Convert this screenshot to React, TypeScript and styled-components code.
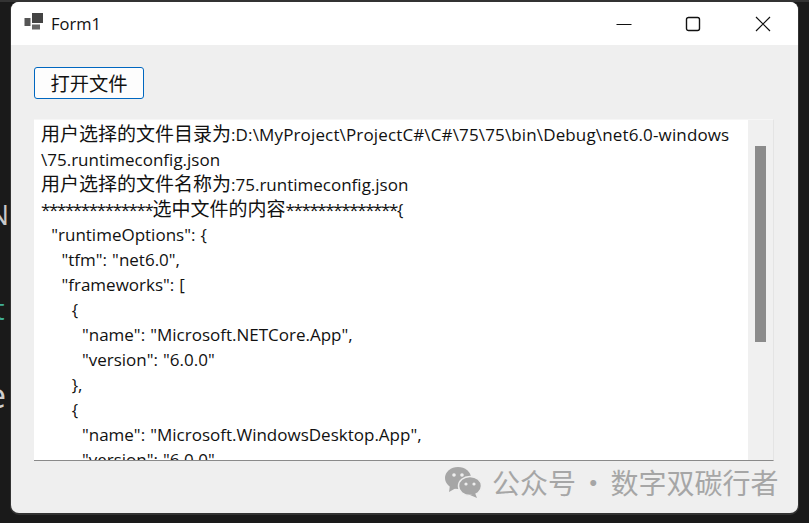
import React from "react";
import styled, { createGlobalStyle } from "styled-components";

const Global = createGlobalStyle`
  html, body { margin: 0; padding: 0; width: 809px; height: 523px; overflow: hidden; background: #1a1a1a; }
`;

const Desktop = styled.div`
  position: relative;
  width: 809px;
  height: 523px;
  box-sizing: border-box;
  padding: 2px 11px 10px;
  background: linear-gradient(#333 0 2px, #1a1a1a 2px);
  overflow: hidden;
  font-family: "Open Sans", "Noto Sans CJK SC", sans-serif;
`;

const BehindLetter = styled.span<{ $top: number; $left: number; $size: number; $color: string }>`
  position: absolute;
  left: ${(p) => p.$left}px;
  top: ${(p) => p.$top}px;
  font-size: ${(p) => p.$size}px;
  font-weight: 500;
  line-height: 30px;
  color: ${(p) => p.$color};
`;

const Win = styled.div`
  position: relative;
  height: 100%;
  display: flex;
  flex-direction: column;
  background: #efefef;
  border-radius: 8px;
  overflow: hidden;
  box-shadow: 0 0 0 1px #333, 0 1px 0 1px #333;
`;

const TitleBar = styled.div`
  flex: 0 0 43px;
  display: flex;
  align-items: center;
  background: #fff;
`;

const AppIcon = styled.svg`
  width: 20px;
  height: 20px;
  margin-left: 13px;
  margin-right: 7px;
  margin-top: -4px;
`;

const Title = styled.span`
  flex: 1;
  font-size: 16.5px;
  color: #111;
`;

const Controls = styled.div`
  display: flex;
`;

const Ctl = styled.div<{ $w: number }>`
  width: ${(p) => p.$w}px;
  height: 43px;
  display: flex;
  align-items: center;
  justify-content: center;
  & svg { width: 16px; height: 16px; }
`;

const Content = styled.div`
  flex: 1;
  display: flex;
  flex-direction: column;
  align-items: flex-start;
  padding: 22px 24px 0 23px;
  min-height: 0;
`;

const OpenButton = styled.button`
  width: 110px;
  height: 32px;
  box-sizing: border-box;
  padding: 0;
  background: #fdfdfd;
  border: 1px solid #0067c0;
  border-radius: 3px;
  font-family: inherit;
  font-size: 19.3px;
  color: #111;
`;

const TextBox = styled.div`
  margin-top: 20px;
  width: 740px;
  height: 342px;
  box-sizing: border-box;
  display: flex;
  background: #fff;
  border-bottom: 1px solid #8a8a8a;
  border-right: 1px solid #e4e4e4;
  border-top: 1px solid #f6f6f6;
  overflow: hidden;
`;

const TextArea = styled.pre`
  flex: 1;
  margin: 0;
  padding: 2px 0 0 7px;
  font-family: inherit;
  font-size: 17px;
  line-height: 25px;
  color: #111;
  white-space: pre;
  word-spacing: 0.7px;
  overflow: hidden;
`;

const Cjk = styled.span`
  font-size: 19px;
`;

const PathText = styled.span`
  letter-spacing: 0.14px;
`;

const Stars = styled.span`
  letter-spacing: -1.4px;
`;

const ScrollTrack = styled.div`
  flex: 0 0 25px;
  padding: 26px 7px 0 7px;
  box-sizing: border-box;
  background: #f0f0f0;
`;

const Thumb = styled.div`
  height: 196px;
  width: 11px;
  background: #8b8b8b;
`;

const Watermark = styled.div`
  position: absolute;
  left: 445px;
  top: 464px;
  display: flex;
  align-items: center;
  gap: 10px;
  color: #a6a6a6;
  font-size: 28px;
  line-height: 36px;
  white-space: nowrap;
  font-family: "Noto Sans CJK SC", sans-serif;
`;

const WeChat = styled.svg`
  width: 37px;
  height: 31px;
`;

const Dot = styled.span`
  margin: 0 -3px;
`;

export default function App() {
  return (
    <Desktop>
      <Global />
      <BehindLetter $top={199} $left={-12} $size={28} $color="#c8c8c8">N</BehindLetter>
      <BehindLetter $top={294} $left={-6} $size={30} $color="#3fae96">t</BehindLetter>
      <BehindLetter $top={380} $left={-13} $size={34} $color="#cfcfcf">e</BehindLetter>
      <Win>
        <TitleBar>
          <AppIcon viewBox="0 0 20 20">
            <rect x="0.5" y="6" width="6" height="8" fill="#555" />
            <rect x="8" y="1" width="11" height="10" fill="#444" />
            <rect x="8" y="12.5" width="8" height="5" fill="#666" />
          </AppIcon>
          <Title>Form1</Title>
          <Controls>
            <Ctl $w={67}>
              <svg viewBox="0 0 16 16"><path d="M0.5 8.5h15" stroke="#111" strokeWidth="1.1" fill="none" /></svg>
            </Ctl>
            <Ctl $w={71}>
              <svg viewBox="0 0 16 16"><rect x="1.5" y="1.5" width="13" height="13" rx="2" stroke="#111" strokeWidth="1.4" fill="none" /></svg>
            </Ctl>
            <Ctl $w={70}>
              <svg viewBox="0 0 16 16"><path d="M1 1l14 14M15 1L1 15" stroke="#111" strokeWidth="1.2" fill="none" /></svg>
            </Ctl>
          </Controls>
        </TitleBar>
        <Content>
          <OpenButton>打开文件</OpenButton>
          <TextBox>
            <TextArea>
              <Cjk>用户选择的文件目录为</Cjk><PathText>{":D:\\MyProject\\ProjectC#\\C#\\75\\75\\bin\\Debug\\net6.0-windows"}</PathText>{"\n"}
              {"\\75.runtimeconfig.json\n"}
              <Cjk>用户选择的文件名称为</Cjk>{":75.runtimeconfig.json\n"}
              <Stars>**************</Stars><Cjk>选中文件的内容</Cjk><Stars>**************</Stars>{"{\n"}
              {"  \"runtimeOptions\": {\n"}
              {"    \"tfm\": \"net6.0\",\n"}
              {"    \"frameworks\": [\n"}
              {"      {\n"}
              {"        \"name\": \"Microsoft.NETCore.App\",\n"}
              {"        \"version\": \"6.0.0\"\n"}
              {"      },\n"}
              {"      {\n"}
              {"        \"name\": \"Microsoft.WindowsDesktop.App\",\n"}
              {"        \"version\": \"6.0.0\"\n"}
            </TextArea>
            <ScrollTrack>
              <Thumb />
            </ScrollTrack>
          </TextBox>
        </Content>
      </Win>
      <Watermark>
        <WeChat viewBox="0 0 37 31">
          <ellipse cx="13" cy="11" rx="13" ry="11" fill="#a6a6a6" />
          <path d="M5 18l-1 7 7-4z" fill="#a6a6a6" />
          <ellipse cx="25" cy="19" rx="11.5" ry="9.5" stroke="#eee" strokeWidth="1.5" fill="#a6a6a6" />
          <path d="M30 26l2 5-7-3z" fill="#a6a6a6" />
          <circle cx="9" cy="8" r="1.8" fill="#eee" />
          <circle cx="17" cy="8" r="1.8" fill="#eee" />
          <circle cx="21" cy="17" r="1.6" fill="#eee" />
          <circle cx="29" cy="17" r="1.6" fill="#eee" />
        </WeChat>
        <span>公众号<Dot> · </Dot>数字双碳行者</span>
      </Watermark>
    </Desktop>
  );
}
